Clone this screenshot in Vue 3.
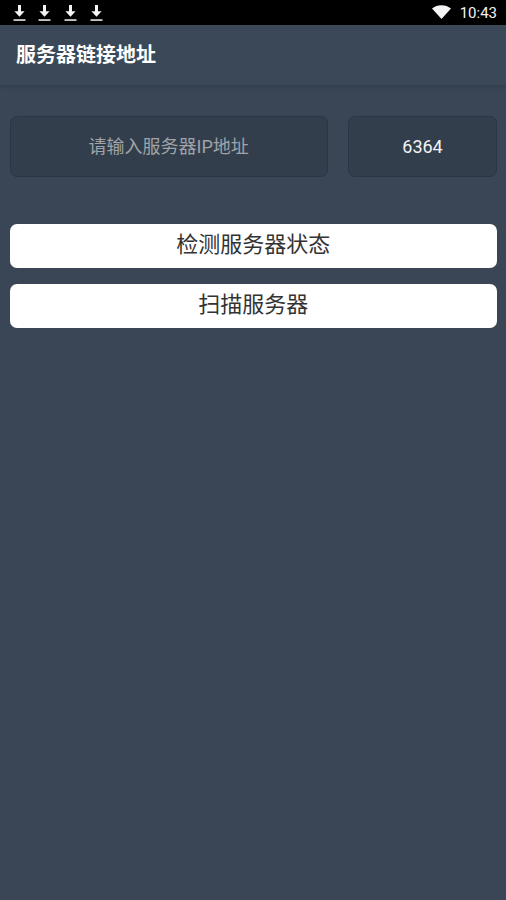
<script setup>
const downloads = [1, 2, 3, 4]
</script>

<template>
  <div class="page">
    <div class="status">
      <div class="downloads">
        <svg v-for="d in downloads" :key="d" class="dl" width="13" height="18" viewBox="0 0 13 18">
          <path d="M5 1h3v6.200h3.600L6.500 12.800 1.400 7.200H5z" fill="#f4f4f4" />
          <rect x="0.500" y="15.300" width="12" height="1.500" fill="#f4f4f4" />
        </svg>
      </div>
      <div class="status-right">
        <svg class="wifi" width="19" height="14" viewBox="0 0 19 14">
          <path d="M0 3.600C2.600 1.400 5.900 0.200 9.500 0.200s6.900 1.200 9.500 3.400L9.500 14z" fill="#f4f4f4" />
        </svg>
        <span class="time">10:43</span>
      </div>
    </div>
    <header class="bar">服务器链接地址</header>
    <main class="content">
      <div class="inputs">
        <div class="field ip">请输入服务器IP地址</div>
        <div class="field port">6364</div>
      </div>
      <button class="btn first">检测服务器状态</button>
      <button class="btn">扫描服务器</button>
    </main>
  </div>
</template>

<style scoped>
.page {
  width: 506px;
  height: 900px;
  background: #3a4656;
  display: flex;
  flex-direction: column;
  font-family: "Roboto", "Noto Sans CJK SC", sans-serif;
  overflow: hidden;
}
.status {
  height: 25px;
  flex: none;
  background: #000;
  display: flex;
  justify-content: space-between;
  align-items: center;
  padding: 0 9px 0 12.500px;
}
.downloads {
  display: flex;
  gap: 12.700px;
  height: 18px;
  margin-top: 1px;
}
.dl {
  display: block;
}
.status-right {
  display: flex;
  align-items: center;
  gap: 9px;
}
.wifi {
  display: block;
  margin-top: -1px;
}
.time {
  color: #f4f4f4;
  font-size: 15px;
  line-height: 25px;
  position: relative;
  top: 1px;
}
.bar {
  height: 60px;
  flex: none;
  box-sizing: border-box;
  padding: 0 16px 4px;
  display: flex;
  align-items: center;
  color: #fff;
  font-size: 20px;
  font-weight: 700;
  background: #3b4858;
  box-shadow: 0 2px 3px rgba(40, 50, 60, 0.45);
}
.content {
  padding: 31px 9px 0 9.500px;
  display: flex;
  flex-direction: column;
}
.inputs {
  display: flex;
  justify-content: space-between;
  margin-bottom: 47px;
}
.field {
  box-sizing: border-box;
  height: 61px;
  background: #323e4c;
  border: 1px solid #2a3645;
  border-radius: 7px;
  display: flex;
  align-items: center;
  justify-content: center;
  font-size: 18px;
  padding-bottom: 3px;
}
.ip {
  width: 318.500px;
  color: #a0a3a7;
}
.port {
  width: 149px;
  color: #f1f3f5;
  padding-bottom: 1px;
}
.btn {
  height: 44px;
  border: none;
  border-radius: 7px;
  background: #fff;
  color: #333;
  font: inherit;
  font-size: 22px;
  padding: 0 0 8px;
}
.btn.first {
  margin-bottom: 16px;
}
</style>
